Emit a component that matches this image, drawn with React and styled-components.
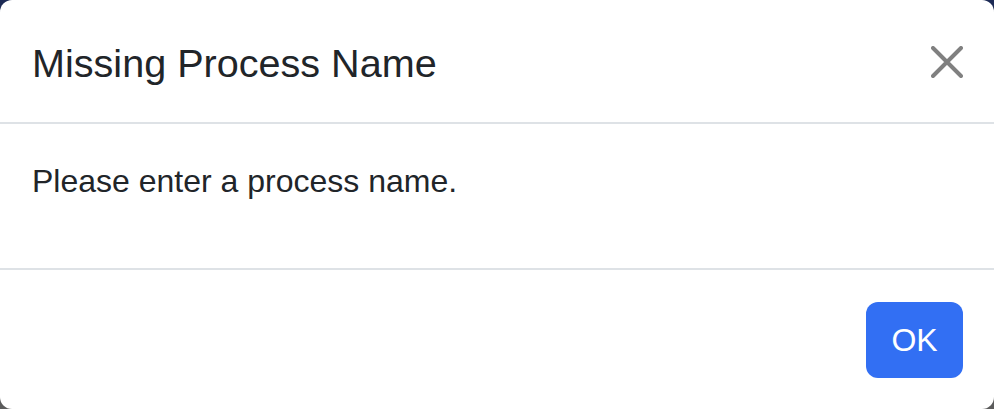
import React from "react";
import styled, { createGlobalStyle } from "styled-components";

const Global = createGlobalStyle`
  html, body { margin: 0; padding: 0; height: 100%; }
  body {
    background: linear-gradient(180deg, #1c2a55 0%, #3a4058 50%, #5c5c5c 100%);
    font-family: "Liberation Sans", Arial, sans-serif;
    color: #212529;
    overflow: hidden;
  }
  #root { height: 100%; }
`;

const Dialog = styled.div`
  box-sizing: border-box;
  width: 994px;
  height: 409px;
  background: #ffffff;
  border-radius: 12px;
  display: flex;
  flex-direction: column;
  overflow: hidden;
`;

const Header = styled.div`
  display: flex;
  align-items: center;
  justify-content: space-between;
  padding: 30px 31px 29px 32px;
  border-bottom: 2px solid #dee2e6;
`;

const Title = styled.h5`
  margin: 0;
  padding-top: 3px;
  font-size: 39.6px;
  line-height: 60px;
  font-weight: 400;
  color: #212529;
`;

const CloseButton = styled.button`
  width: 32px;
  height: 32px;
  padding: 0;
  border: 0;
  background: transparent;
  display: flex;
  cursor: pointer;
`;

const Body = styled.div`
  padding: 33px 32px 31px;
  border-bottom: 2px solid #dee2e6;
`;

const Message = styled.p`
  margin: 0 0 32px;
  font-size: 32px;
  line-height: 48px;
`;

const Footer = styled.div`
  flex: 1;
  display: flex;
  justify-content: flex-end;
  align-items: flex-start;
  padding: 32px 31px 31px;
`;

const PrimaryButton = styled.button`
  height: 76px;
  padding: 0 24px;
  min-width: 97px;
  border: 0;
  border-radius: 12px;
  background: #326ff3;
  color: #ffffff;
  font-family: "Liberation Sans", Arial, sans-serif;
  font-size: 32px;
  line-height: 48px;
  cursor: pointer;
`;

export default function App() {
  return (
    <>
      <Global />
      <Dialog>
        <Header>
          <Title>Missing Process Name</Title>
          <CloseButton aria-label="Close">
            <svg width="32" height="32" viewBox="0 0 32 32">
              <path
                d="M2 2 L30 30 M30 2 L2 30"
                stroke="#808080"
                strokeWidth="4"
                strokeLinecap="round"
                fill="none"
              />
            </svg>
          </CloseButton>
        </Header>
        <Body>
          <Message>Please enter a process name.</Message>
        </Body>
        <Footer>
          <PrimaryButton>OK</PrimaryButton>
        </Footer>
      </Dialog>
    </>
  );
}
